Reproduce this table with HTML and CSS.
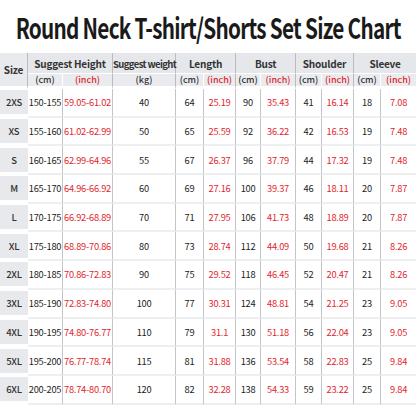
FILE: index.html
```html
<!DOCTYPE html>
<html>
<head>
<meta charset="utf-8">
<link rel="stylesheet" href="styles.css">
</head>
<body>
<div class="title-bar"><h1 class="title">Round Neck T-shirt/Shorts Set Size Chart</h1></div>
<table class="chart">
<colgroup>
<col class="c28"><col class="c35"><col class="c50"><col class="c63"><col class="c28"><col class="c32"><col class="c25"><col class="c35"><col class="c26"><col class="c32"><col class="c27"><col class="c35">
</colgroup>
<thead>
<tr class="h1">
<th rowspan="2" class="size-h">Size</th>
<th colspan="2" class="grp">Suggest Height</th>
<th class="grp"><span class="tight">Suggest weight</span></th>
<th colspan="2" class="grp">Length</th>
<th colspan="2" class="grp">Bust</th>
<th colspan="2" class="grp">Shoulder</th>
<th colspan="2" class="grp last">Sleeve</th>
</tr>
<tr class="h2">
<th class="cm">(cm)</th><th class="in">(inch)</th>
<th class="cm grpend">(kg)</th>
<th class="cm">(cm)</th><th class="in">(inch)</th>
<th class="cm">(cm)</th><th class="in">(inch)</th>
<th class="cm">(cm)</th><th class="in">(inch)</th>
<th class="cm">(cm)</th><th class="in last">(inch)</th>
</tr>
</thead>
<tbody>
<tr><td class="sz"><span>2XS</span></td><td>150-155</td><td class="r">59.05-61.02</td><td>40</td><td>64</td><td class="r">25.19</td><td>90</td><td class="r">35.43</td><td>41</td><td class="r">16.14</td><td>18</td><td class="r last">7.08</td></tr>
<tr><td class="sz"><span>XS</span></td><td>155-160</td><td class="r">61.02-62.99</td><td>50</td><td>65</td><td class="r">25.59</td><td>92</td><td class="r">36.22</td><td>42</td><td class="r">16.53</td><td>19</td><td class="r last">7.48</td></tr>
<tr><td class="sz"><span>S</span></td><td>160-165</td><td class="r">62.99-64.96</td><td>55</td><td>67</td><td class="r">26.37</td><td>96</td><td class="r">37.79</td><td>44</td><td class="r">17.32</td><td>19</td><td class="r last">7.48</td></tr>
<tr><td class="sz"><span>M</span></td><td>165-170</td><td class="r">64.96-66.92</td><td>60</td><td>69</td><td class="r">27.16</td><td>100</td><td class="r">39.37</td><td>46</td><td class="r">18.11</td><td>20</td><td class="r last">7.87</td></tr>
<tr><td class="sz"><span>L</span></td><td>170-175</td><td class="r">66.92-68.89</td><td>70</td><td>71</td><td class="r">27.95</td><td>106</td><td class="r">41.73</td><td>48</td><td class="r">18.89</td><td>20</td><td class="r last">7.87</td></tr>
<tr><td class="sz"><span>XL</span></td><td>175-180</td><td class="r">68.89-70.86</td><td>80</td><td>73</td><td class="r">28.74</td><td>112</td><td class="r">44.09</td><td>50</td><td class="r">19.68</td><td>21</td><td class="r last">8.26</td></tr>
<tr><td class="sz"><span>2XL</span></td><td>180-185</td><td class="r">70.86-72.83</td><td>90</td><td>75</td><td class="r">29.52</td><td>118</td><td class="r">46.45</td><td>52</td><td class="r">20.47</td><td>21</td><td class="r last">8.26</td></tr>
<tr><td class="sz"><span>3XL</span></td><td>185-190</td><td class="r">72.83-74.80</td><td>100</td><td>77</td><td class="r">30.31</td><td>124</td><td class="r">48.81</td><td>54</td><td class="r">21.25</td><td>23</td><td class="r last">9.05</td></tr>
<tr><td class="sz"><span>4XL</span></td><td>190-195</td><td class="r">74.80-76.77</td><td>110</td><td>79</td><td class="r">31.1</td><td>130</td><td class="r">51.18</td><td>56</td><td class="r">22.04</td><td>23</td><td class="r last">9.05</td></tr>
<tr><td class="sz"><span>5XL</span></td><td>195-200</td><td class="r">76.77-78.74</td><td>115</td><td>81</td><td class="r">31.88</td><td>136</td><td class="r">53.54</td><td>58</td><td class="r">22.83</td><td>25</td><td class="r last">9.84</td></tr>
<tr><td class="sz"><span>6XL</span></td><td>200-205</td><td class="r">78.74-80.70</td><td>120</td><td>82</td><td class="r">32.28</td><td>138</td><td class="r">54.33</td><td>59</td><td class="r">23.22</td><td>25</td><td class="r last">9.84</td></tr>
</tbody>
</table>
</body>
</html>
```
FILE: styles.css
```css
html, body {
  margin: 0;
  padding: 0;
  background: #fff;
}
body {
  font-family: "Noto Sans CJK SC", "Noto Sans", sans-serif;
  color: #222;
  width: 416px;
  overflow: hidden;
}
.title-bar {
  height: 53px;
  display: flex;
  align-items: center;
  justify-content: center;
  overflow: hidden;
}
.title {
  margin: 0;
  font-size: 28px;
  font-weight: 700;
  color: #1a1a1a;
  white-space: nowrap;
  letter-spacing: -1px;
  transform: scaleX(0.74);
  line-height: 1;
  flex: none;
}
.chart {
  width: 416px;
  table-layout: fixed;
  border-collapse: separate;
  border-spacing: 0;
}
.c28 { width: 28px; }
.c35 { width: 35px; }
.c50 { width: 50px; }
.c63 { width: 63px; }
.c32 { width: 32px; }
.c25 { width: 25px; }
.c26 { width: 26px; }
.c27 { width: 27px; }
th, td {
  padding: 0;
  text-align: center;
  white-space: nowrap;
  overflow: visible;
}
th {
  background: #e5e7eb;
  color: #333;
  font-weight: 700;
}
.h1 th {
  height: 20px;
  font-size: 10px;
  letter-spacing: -0.2px;
  border-right: 1.5px solid #b9bbbf;
  border-bottom: 1px solid #fff;
}
.h1 th .tight {
  letter-spacing: -0.6px;
  font-size: 9.5px;
}
.h1 th.size-h {
  background: #e9eaee;
  border-bottom: 3px solid #fff;
  vertical-align: middle;
}
.h1 th.last { border-right: none; }
.h2 th {
  height: 12px;
  font-size: 9px;
  font-weight: 500;
  line-height: 12px;
  border-bottom: 3px solid #fff;
  background: #e9ebee;
}
.h2 th.cm { border-right: 1px solid #fff; }
.h2 th.in { color: #e1262d; border-right: 1.5px solid #b9bbbf; }
.h2 th.grpend { border-right: 1.5px solid #b9bbbf; }
.h2 th.last { border-right: none; }
td {
  height: 26.7px;
  font-size: 9.3px;
  letter-spacing: -0.25px;
  color: #222;
  border-right: 1.5px solid #c3c4c7;
  border-bottom: 2px solid #eceef0;
}
td.r { color: #e1262d; }
td.last { border-right: none; }
td.sz {
  border-right: none;
  border-bottom: 2px solid #fff;
  background: #fff;
  padding: 0;
}
td.sz span {
  display: flex;
  align-items: center;
  justify-content: center;
  height: 24px;
  background: #e8e9ed;
  color: #333;
  font-weight: 500;
  font-size: 9.5px;
}
```
